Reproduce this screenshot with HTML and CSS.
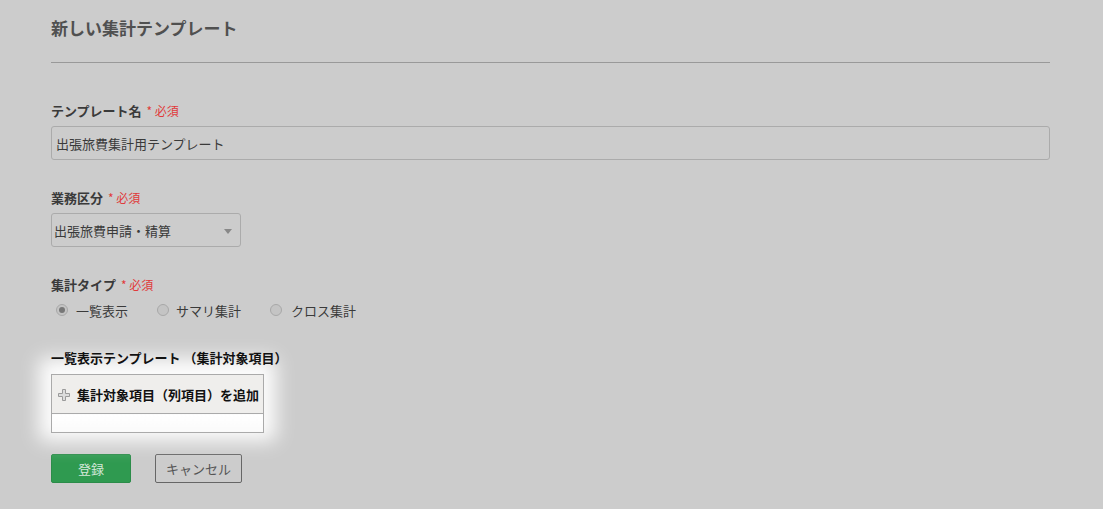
FILE: index.html
```html
<!DOCTYPE html>
<html lang="ja">
<head>
  <meta charset="UTF-8" />
  <title>新しい集計テンプレート</title>
  <link rel="stylesheet" href="styles.css">
</head>
<body>
  <div class="page">
    <h2 class="page-title">新しい集計テンプレート</h2>

    <div class="field">
      <label class="field-label">テンプレート名 <span class="req">* 必須</span></label>
      <input class="text-input" type="text" value="出張旅費集計用テンプレート">
    </div>

    <div class="field">
      <label class="field-label">業務区分 <span class="req">* 必須</span></label>
      <div class="select">
        <span>出張旅費申請・精算</span>
        <span class="caret"></span>
      </div>
    </div>

    <div class="field">
      <label class="field-label">集計タイプ <span class="req">* 必須</span></label>
      <div class="radios">
        <span class="radio checked"><i></i>一覧表示</span>
        <span class="radio"><i></i>サマリ集計</span>
        <span class="radio"><i></i>クロス集計</span>
      </div>
    </div>

    <div class="field spot-field">
      <label class="field-label dark">一覧表示テンプレート （集計対象項目）</label>
      <div class="spot">
        <table class="items">
          <thead>
            <tr>
              <th>
                <svg class="plus" width="12" height="12" viewBox="0 0 12 12">
                  <path d="M4.5 0.5h3v4h4v3h-4v4h-3v-4h-4v-3h4z" fill="#dcdcdc" stroke="#9a9a9a" stroke-width="1"/>
                </svg>
                集計対象項目（列項目）を追加
              </th>
            </tr>
          </thead>
          <tbody>
            <tr><td></td></tr>
          </tbody>
        </table>
      </div>
    </div>

    <div class="actions">
      <button class="btn btn-primary">登録</button>
      <button class="btn btn-cancel">キャンセル</button>
    </div>
  </div>
</body>
</html>
```

FILE: styles.css
```css
html, body {
  margin: 0;
  padding: 0;
  background: #cccccc;
  font-family: 'Noto Sans CJK JP', 'Noto Sans', sans-serif;
  color: #3a3a3a;
}

.page {
  padding: 16px 53px 40px 51px;
}

.page-title {
  margin: 0;
  font-size: 17px;
  line-height: 24px;
  font-weight: 700;
  color: #505050;
  padding-bottom: 22px;
  border-bottom: 1px solid #999;
}

.field {
  margin-top: 29px;
}

.page-title + .field {
  margin-top: 39px;
}

.field-label {
  display: block;
  font-size: 13px;
  line-height: 18px;
  font-weight: 700;
  color: #3a3a3a;
}

.field-label.dark {
  color: #111;
  position: relative;
  z-index: 2;
}

.req {
  color: #e03a3a;
  font-weight: 400;
  font-size: 12px;
  margin-left: 2px;
}

.text-input {
  display: block;
  box-sizing: border-box;
  width: 100%;
  height: 34px;
  margin-top: 6px;
  padding: 0 4px;
  border: 1px solid #ababab;
  border-radius: 3px;
  background: #cccccc;
  font-family: inherit;
  font-size: 13px;
  color: #3a3a3a;
}

.select {
  box-sizing: border-box;
  width: 190px;
  height: 34px;
  margin-top: 6px;
  padding: 0 8px 0 2px;
  border: 1px solid #ababab;
  border-radius: 3px;
  display: flex;
  align-items: center;
  justify-content: space-between;
  font-size: 13px;
  color: #3a3a3a;
}

.caret {
  width: 0;
  height: 0;
  border-left: 4px solid transparent;
  border-right: 4px solid transparent;
  border-top: 5px solid #888;
  margin-top: 2px;
}

.radios {
  display: flex;
  align-items: center;
  height: 20px;
  margin-top: 6px;
  padding-left: 5px;
  font-size: 13px;
  color: #3a3a3a;
}

.radio {
  display: flex;
  align-items: center;
  margin-right: 29px;
}

.radio i {
  box-sizing: border-box;
  width: 12px;
  height: 12px;
  border: 1px solid #a8a8a8;
  border-radius: 50%;
  background: #c4c4c4;
  margin-right: 8px;
  display: flex;
  align-items: center;
  justify-content: center;
}

.radio.checked i::after {
  content: "";
  width: 6px;
  height: 6px;
  border-radius: 50%;
  background: #777;
}

.radio:nth-child(2) i { margin-right: 7px; }
.radio:nth-child(3) i { margin-right: 9px; }

.spot-field {
  position: relative;
}

.spot {
  margin-top: 7px;
  width: 213px;
  position: relative;
  box-shadow: 0 -4px 18px 12px rgba(255, 255, 255, 0.95);
  background: #fff;
}

.items {
  width: 213px;
  border-collapse: collapse;
  table-layout: fixed;
}

.items th,
.items td {
  border: 1px solid #aaa;
  padding: 0;
}

.items th {
  height: 38px;
  background: #efeeec;
  text-align: left;
  font-size: 13px;
  font-weight: 700;
  color: #111;
  padding-left: 6px;
  white-space: nowrap;
}

.plus {
  vertical-align: -1px;
  margin-right: 4px;
}

.items td {
  height: 18px;
  background: linear-gradient(#fff, #fafafa);
}

.actions {
  display: flex;
  gap: 24px;
  margin-top: 21px;
}

.btn {
  height: 29px;
  border-radius: 2px;
  font-family: inherit;
  font-size: 13px;
  padding: 0;
  cursor: pointer;
}

.btn-primary {
  width: 80px;
  background: #2f9a50;
  border: 1px solid #2b8c49;
  color: #d6e8da;
}

.btn-cancel {
  width: 87px;
  background: transparent;
  border: 1px solid #666;
  color: #555;
}
```
